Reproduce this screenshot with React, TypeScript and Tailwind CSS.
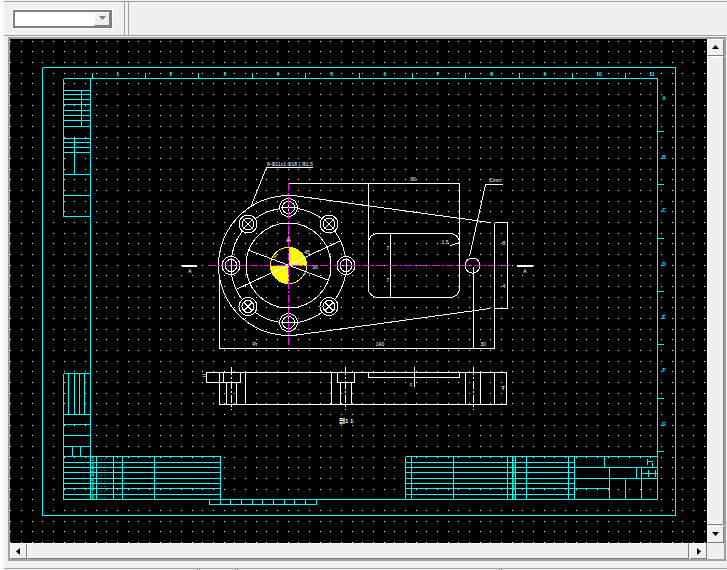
import React from "react";

const seg = (a: number[][]) =>
  a.map(([x1, y1, x2, y2]) => `M${x1 + 0.5} ${y1 + 0.5}L${x2 + 0.5} ${y2 + 0.5}`).join("");

const dots = (() => {
  let d = "";
  for (let j = 0; j < 48; j++) {
    for (let i = 0; i < 66; i++) {
      const x = Math.ceil(10 + (i * 32) / 3);
      const y = Math.floor(41 + (j * 32) / 3);
      d += `M${x} ${y}h1v1h-1z`;
    }
  }
  return d;
})();

const rowsY = [456, 462, 467, 472, 478, 483, 488, 494, 499];
const topTicks = [92, 145, 198, 252, 305, 359, 412, 465, 519, 572, 625];
const rightTicks = [131, 184, 238, 291, 344, 398, 451];
const topLabels = [118, 171, 225, 278, 332, 385, 438, 492, 545, 599, 652];
const rightLabels = [98, 157, 210, 264, 317, 370, 424];

const cyanLines: number[][] = [
  [42, 67, 675, 67], [675, 67, 675, 515], [42, 515, 675, 515], [42, 67, 42, 515],
  [63, 78, 657, 78], [657, 78, 657, 499], [220, 499, 657, 499],
  [63, 78, 63, 216], [63, 373, 63, 499], [90, 78, 90, 456],
  ...[90, 94, 99, 104, 110, 115, 120, 126, 138, 142, 147, 152, 174, 195, 216].map((y) => [63, y, 90, y]),
  [81, 90, 81, 126], [74, 138, 74, 174],
  ...[373, 414, 424, 435, 446].map((y) => [63, y, 90, y]),
  ...[68, 74, 79, 84].map((x) => [x, 373, x, 414]),
  [72, 446, 72, 456], [80, 446, 80, 456],
  ...rowsY.map((y) => [63, y, 220, y]),
  ...[90, 96, 113, 122, 154, 220].map((x) => [x, 456, x, 499]),
  [209, 504, 316, 504], [209, 499, 209, 504],
  ...[220, 230, 241, 252, 262, 273, 284, 294, 305, 316].map((x) => [x, 499, x, 504]),
  ...rowsY.slice(0, 8).map((y) => [405, y, 574, y]),
  ...[405, 411, 453, 507, 512, 515, 526, 568, 574].map((x) => [x, 456, x, 499]),
  [574, 456, 657, 456], [574, 467, 657, 467], [574, 478, 657, 478], [574, 488, 609, 488],
  [604, 456, 604, 467], [609, 467, 609, 499], [636, 467, 636, 478], [641, 467, 641, 499], [625, 478, 625, 499],
  [647, 458, 647, 464], [647, 461, 652, 461], [652, 462, 652, 467], [641, 473, 657, 473], [648, 469, 648, 476], [655, 469, 655, 476],
  ...topTicks.map((x) => [x, 72, x, 78]),
  ...rightTicks.map((y) => [657, y, 663, y]),
];

const holes: [number, number, boolean][] = [
  [288.5, 207.5, false], [329, 224, true], [346, 265.5, false], [329, 306.5, true],
  [288.5, 322.5, false], [248, 306.5, true], [231, 265.5, false], [248, 224, true],
];

const whiteLines: number[][] = [
  [288, 183, 459, 183], [368, 183, 368, 288], [459, 183, 459, 243], [219, 278, 219, 348], [219, 348, 494, 348],
  [494, 222, 494, 348], [494, 222, 507, 222], [507, 222, 507, 308], [494, 308, 507, 308], [473, 266, 473, 348],
  [390, 233, 390, 297], [450, 245, 459, 242], [469, 256, 485, 184], [485, 184, 502, 184],
  [250, 207, 266, 167], [266, 167, 312, 167],
  [205, 372, 506, 372], [219, 404, 506, 404], [206, 372, 206, 382], [206, 382, 222, 382], [219, 372, 219, 404],
  [223, 372, 223, 382], [240, 372, 240, 382], [223, 382, 240, 382], [226, 382, 226, 404], [236, 382, 236, 404],
  [245, 372, 245, 404], [331, 372, 331, 404], [337, 372, 337, 382], [354, 372, 354, 382], [337, 382, 354, 382],
  [340, 382, 340, 404], [351, 382, 351, 404], [368, 372, 368, 377], [459, 372, 459, 377], [368, 377, 459, 377],
  [414, 366, 414, 386], [465, 372, 465, 404], [480, 372, 480, 404], [494, 372, 494, 404], [506, 372, 506, 404],
];

function Tiny({ x, y, t, size = 5, fill = "#ffffff", bold = false }: { x: number; y: number; t: string; size?: number; fill?: string; bold?: boolean }) {
  return (
    <text x={x} y={y} fontSize={size} fill={fill} textAnchor="middle" fontWeight={bold ? 700 : 400}>
      {t}
    </text>
  );
}

function Drawing() {
  return (
    <svg width={697} height={504} viewBox="10 39 697 504" className="block bg-black font-['Liberation_Sans','Noto_Sans_CJK_SC',sans-serif]">
      <path d={dots} fill="#ffffff" shapeRendering="crispEdges" />
      <path d={seg(cyanLines)} stroke="#00ffff" fill="none" shapeRendering="crispEdges" />
      {topLabels.map((x, i) => (
        <Tiny key={x} x={x} y={76} t={String(i + 1)} fill="#00ffff" bold />
      ))}
      {rightLabels.map((y, i) => (
        <Tiny key={y} x={664} y={y + 2} t={"ABCDEFG"[i]} fill="#00ffff" bold />
      ))}
      {rowsY.slice(0, 8).map((y, i) => (
        <g key={y}>
          <Tiny x={93} y={y + 4.5} t={String(i + 1)} size={5} fill="#00ffff" bold />
          <Tiny x={103} y={y + 4.5} t="· ·" size={5} fill="#00ffff" bold />
          <Tiny x={513.5} y={y + 4.5} t={String(i + 1)} size={5} fill="#00ffff" bold />
        </g>
      ))}

      <g shapeRendering="crispEdges" fill="none" stroke="#ffffff">
        <circle cx={288.5} cy={265.5} r={57.5} />
        <path d="M297.6 196.1A70 70 0 1 0 297.6 334.9L490 308.5M297.6 196.1L490 222.5" />
        <circle cx={288.5} cy={265.5} r={42.5} />
        <path d="M377 233.5H450A9 9 0 0 1 459.5 242.5V288A9 9 0 0 1 450 297.5H377A9 9 0 0 1 368.5 288V242A9 9 0 0 1 377 233.5Z" />
        <circle cx={472.5} cy={265.5} r={7.5} />
        <path d={seg(whiteLines)} />
        {holes.map(([x, y, diag]) => (
          <g key={`${x}-${y}`}>
            <circle cx={x} cy={y} r={9} fill="#000000" />
            <circle cx={x} cy={y} r={6} />
            {diag ? (
              <path d={`M${x - 4} ${y - 4}L${x + 4} ${y + 4}M${x + 4} ${y - 4}L${x - 4} ${y + 4}`} />
            ) : (
              <path d={`M${x - 8} ${y}H${x + 8}M${x} ${y - 8}V${y + 8}`} />
            )}
          </g>
        ))}
        <path d="M517 265.5H533M517 266.5H533M182 265.5H197M182 266.5H197" />
      </g>

      <g shapeRendering="crispEdges">
        <path d="M288.5 265.5V247.5A18 18 0 0 1 306.5 265.5ZM288.5 265.5V283.5A18 18 0 0 1 270.5 265.5Z" fill="#ffff00" />
        <circle cx={288.5} cy={265.5} r={18} fill="none" stroke="#ffff00" />
        <path d="M248 250L328 280M237 289L340 241" stroke="#ffffff" fill="none" />
        <path d="M288.5 183V347M208 265.5H510" stroke="#ff00ff" strokeDasharray="8 2 2 2" fill="none" />
      </g>

      <path
        d="M231.5 367V410M345.5 367V410M473.5 367V410"
        stroke="#ffffff"
        strokeDasharray="8 2 2 2"
        fill="none"
        shapeRendering="crispEdges"
      />

      <Tiny x={290} y={166} t="8-Φ11x1 Φ18∓Φ1.5" size={5} />
      <Tiny x={255} y={346} t="Pr" />
      <Tiny x={380} y={346} t="140" />
      <Tiny x={483} y={346} t="30" />
      <Tiny x={413} y={181} t="90" />
      <Tiny x={445} y={244} t="1.5" />
      <Tiny x={495} y={182} t="Cmm" />
      <Tiny x={288.5} y={242} t="A" size={7} />
      <Tiny x={275} y={258} t="R" />
      <Tiny x={307} y={254} t="45" />
      <Tiny x={315} y={269} t="30" />
      <Tiny x={388} y={250} t="7" />
      <Tiny x={388} y={282} t="7" />
      <Tiny x={504} y={245} t="8" />
      <Tiny x={504} y={288} t="4" />
      <Tiny x={190} y={273} t="A" />
      <Tiny x={525} y={273} t="A" />
      <Tiny x={204} y={378} t="=" size={7} />
      <Tiny x={503} y={390} t="Ŧ" size={6} />
      <Tiny x={411} y={386} t="c" />
      <text x={339} y={423} fontSize={6} fontWeight={700} fill="#ffffff">
        剖1 1
      </text>
    </svg>
  );
}

function Arrow({ points, fill = "#000000", w = 9, h = 9 }: { points: string; fill?: string; w?: number; h?: number }) {
  return (
    <svg width={w} height={h} viewBox="0 0 9 9" className="block">
      <polygon points={points} fill={fill} />
    </svg>
  );
}

const raised = "border border-t-white border-l-white border-r-[#808080] border-b-[#808080] bg-[#f0f0f0]";

export default function App() {
  return (
    <div className="flex h-[570px] w-[727px] overflow-hidden bg-[#f0f0f0]">
      <div className="w-[4px] bg-[#f8f9ff]" />
      <div className="flex min-w-0 flex-1 flex-col">
        <div className="mt-px flex h-[35px] border-y border-[#a0a0a0] bg-[#f0f0f0]">
          <div className="flex w-[120px] items-center pl-[9px]">
            <div className="flex h-[18px] w-[99px] justify-end border-2 border-[#808080] bg-white outline outline-1 outline-white">
              <div className={`flex h-[14px] w-[16px] items-center justify-center ${raised}`}>
                <Arrow points="1,2 8,2 4.5,6" fill="#808080" />
              </div>
            </div>
          </div>
          <div className="mr-[3px] w-px bg-[#a0a0a0]" />
          <div className="w-px bg-[#a0a0a0]" />
        </div>
        <div className="ml-[4px] mr-px mt-px flex h-[524px] w-[718px] flex-col border-2 border-[#a0a0a0]">
          <div className="flex h-[504px]">
            <Drawing />
            <div className="flex w-[17px] flex-col bg-[#f0f0f0]">
              <div className={`flex h-[17px] items-center justify-center ${raised}`}>
                <Arrow points="1,6 8,6 4.5,2" />
              </div>
              <div className={`flex-1 ${raised}`} />
              <div className={`mt-px flex h-[17px] items-center justify-center ${raised}`}>
                <Arrow points="1,2 8,2 4.5,6" />
              </div>
            </div>
          </div>
          <div className="flex h-[16px] bg-[#f0f0f0]">
            <div className={`flex w-[17px] items-center justify-center ${raised}`}>
              <Arrow points="6,1 6,8 2,4.5" />
            </div>
            <div className={`flex-1 ${raised}`} />
            <div className={`ml-px flex w-[17px] items-center justify-center ${raised}`}>
              <Arrow points="3,1 3,8 7,4.5" />
            </div>
            <div className="w-[17px]" />
          </div>
        </div>
        <div className="mt-[7px] flex flex-1 border-t border-[#a0a0a0]">
          <div className="w-[194px] border-r border-[#a0a0a0]" />
          <div className="ml-px w-[37px] border-x border-[#a0a0a0]" />
          <div className="ml-px w-[263px] border-x border-[#a0a0a0]" />
          <div className="ml-px flex-1 border-l border-[#a0a0a0]" />
        </div>
      </div>
    </div>
  );
}
